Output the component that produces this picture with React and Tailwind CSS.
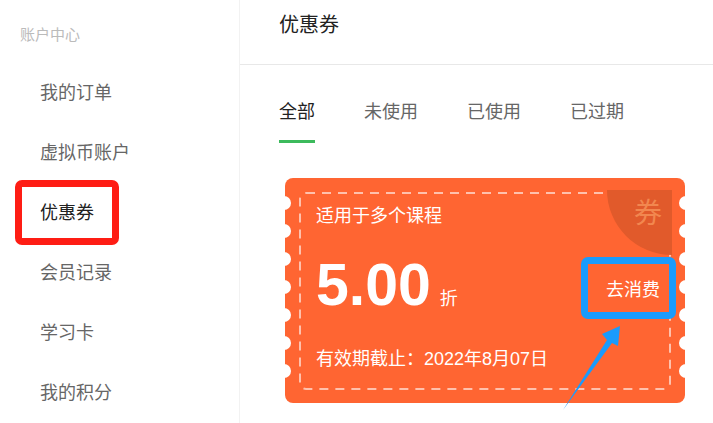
import React from 'react';

const MENU = ['我的订单', '虚拟币账户', '优惠券', '会员记录', '学习卡', '我的积分'];
const TABS = ['全部', '未使用', '已使用', '已过期'];
const NOTCHES = [25, 53, 81, 109, 137, 165, 193];

function Sidebar() {
  return (
    <aside className="w-[240px] shrink-0 border-r border-[#f2f2f2] bg-white">
      <div className="h-[63px] pt-[25px] pl-[20px] text-[15px] leading-[20px] text-[#bbbbbb]">账户中心</div>
      {MENU.map((label) => {
        const active = label === '优惠券';
        return (
          <div
            key={label}
            className={`relative flex h-[60px] items-center pl-[40px] text-[18px] ${active ? 'text-[#222]' : 'text-[#666]'}`}
          >
            {label}
            {active && (
              <span className="absolute left-[15px] top-[-3px] h-[65px] w-[104px] rounded-[7px] border-[7px] border-[#fe1d14]" />
            )}
          </div>
        );
      })}
    </aside>
  );
}

function Coupon() {
  return (
    <div className="relative ml-[6px] mt-[35px] h-[225px] w-[400px] rounded-[8px] bg-[#ff6532] pl-[31px] pr-[25px] pt-[26px] text-white">
      {NOTCHES.map((top) => (
        <React.Fragment key={top}>
          <span className="absolute left-[-8px] h-[14px] w-[14px] rounded-full bg-white" style={{ top: top - 7 }} />
          <span className="absolute right-[-8px] h-[14px] w-[14px] rounded-full bg-white" style={{ top: top - 7 }} />
        </React.Fragment>
      ))}
      <svg className="absolute left-[14px] top-[14px]" width="372" height="198" viewBox="0 0 372 198">
        <rect x="1" y="1" width="370" height="196" rx="6" fill="none" stroke="rgba(255,255,255,0.6)" strokeWidth="2" strokeDasharray="9 7" />
      </svg>
      <div className="absolute right-[13px] top-[12px] h-[65px] w-[65px] rounded-bl-full rounded-tr-[6px] bg-[#e15a2b] pr-[10px] pt-[10px] text-right text-[28px] leading-none text-[#f2874f]">
        券
      </div>

      <div className="relative text-[18px] leading-[24px]">适用于多个课程</div>
      <div className="relative mt-[28px] flex justify-between">
        <div className="flex items-baseline">
          <span className="text-[59px] font-bold leading-none">5.00</span>
          <span className="ml-[9px] text-[18px]">折</span>
        </div>
        <div className="relative mt-[22px] self-start text-[18px] leading-[24px]">
          去消费
          <span className="absolute bottom-[-17px] left-[-25px] right-[-16px] top-[-21px] rounded-[7px] border-[7px] border-[#1a9bfc]" />
        </div>
      </div>
      <div className="relative mt-[32px] text-[18px] leading-[24px]">有效期截止：2022年8月07日</div>
    </div>
  );
}

export default function App() {
  return (
    <div
      className="relative flex h-[423px] w-[713px] overflow-hidden bg-white"
      style={{ fontFamily: '"Liberation Sans", "Noto Sans CJK SC", sans-serif' }}
    >
      <Sidebar />
      <main className="flex-1">
        <div className="h-[65px] border-b border-[#e8e8e8] pl-[39px] pt-[12px] text-[20px] leading-[26px] text-[#222]">优惠券</div>
        <div className="pl-[39px]">
          <div className="mt-[35px] flex gap-[49px]">
            {TABS.map((t, i) => (
              <div
                key={t}
                className={`border-b-[3px] pb-[16px] text-[18px] leading-[24px] ${i === 0 ? 'border-[#3cba5c] text-[#222]' : 'border-transparent text-[#666]'}`}
              >
                {t}
              </div>
            ))}
          </div>
          <Coupon />
        </div>
      </main>
      <svg className="pointer-events-none absolute left-0 top-0" width="713" height="423" viewBox="0 0 713 423">
        <polygon points="563,410 607,340 602,334 620,326 618,346 612,343" fill="#1a9bfc" />
      </svg>
    </div>
  );
}
